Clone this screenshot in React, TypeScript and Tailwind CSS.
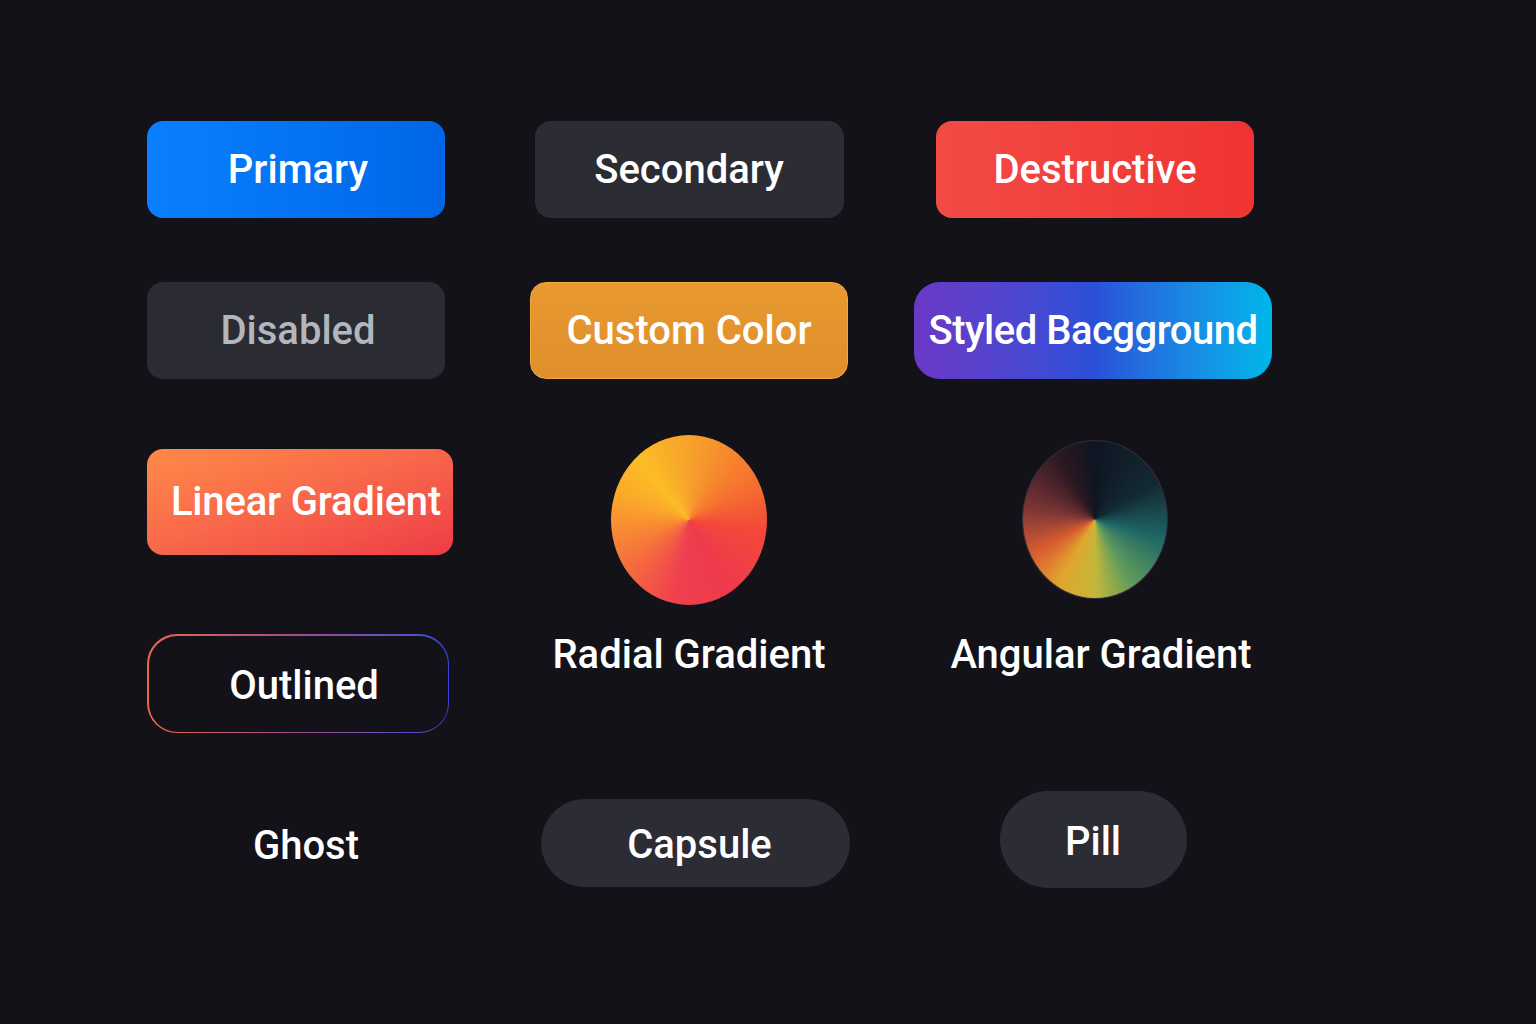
export default function App() {
  return (
    <div className="min-h-screen w-full bg-[#121218] font-['Roboto',sans-serif] text-[40px] font-medium text-white">
      <div className="pl-[147px] pt-[121px]">
        {/* Row 1 */}
        <div className="grid grid-cols-[352px_380px_432px] items-start">
          <div className="flex h-[97px] w-[298px] items-center justify-center rounded-[16px] bg-gradient-to-r from-[#0a80ff] to-[#0066e6] pl-[4px]">
            Primary
          </div>
          <div className="flex justify-center">
            <div className="flex h-[97px] w-[309px] items-center justify-center rounded-[16px] bg-[#2c2c34]">
              Secondary
            </div>
          </div>
          <div className="flex justify-center">
            <div className="flex h-[97px] w-[318px] items-center justify-center rounded-[16px] bg-gradient-to-r from-[#f34a45] to-[#ef3333]">
              Destructive
            </div>
          </div>
        </div>

        {/* Row 2 */}
        <div className="mt-[64px] grid grid-cols-[352px_380px_432px] items-start">
          <div className="flex h-[97px] w-[298px] items-center justify-center rounded-[16px] bg-[#2b2b33] pl-[4px] text-[#b2b7bd]">
            Disabled
          </div>
          <div className="flex justify-center">
            <div className="flex h-[97px] w-[318px] items-center justify-center rounded-[16px] border border-[#f0a840] bg-gradient-to-b from-[#e8992f] to-[#df8f2c]">
              Custom Color
            </div>
          </div>
          <div className="flex justify-center pr-[4px]">
            <div className="flex h-[97px] w-[358px] items-center justify-center whitespace-nowrap rounded-[26px] bg-gradient-to-r from-[#6a38c6] via-[#2a4fd8] to-[#00b6ea] tracking-[-0.5px]">
              Styled Bacgground
            </div>
          </div>
        </div>

        {/* Rows 3-4 */}
        <div className="mt-[56px] grid grid-cols-[352px_380px_432px] items-start">
          <div className="flex flex-col pt-[14px]">
            <div className="flex h-[106px] w-[306px] items-center justify-center whitespace-nowrap rounded-[16px] bg-gradient-to-br from-[#ff8a48] via-[#f8664a] to-[#ee3a48] pl-[12px] tracking-[-0.2px]">
              Linear Gradient
            </div>
            <div className="mt-[79px] w-[302px] rounded-[30px] bg-gradient-to-r from-[#e8684a] via-[#a04a8a] to-[#3a46d8] p-[1.5px]">
              <div className="flex h-[96px] items-center justify-center rounded-[28.5px] bg-[#121218] pl-[12px] pt-[4px]">
                Outlined
              </div>
            </div>
          </div>
          <div className="flex flex-col items-center">
            <div className="h-[170px] w-[156px] rounded-[50%] bg-[conic-gradient(from_0deg,#f7a22c_0deg,#f6742f_55deg,#f4473a_100deg,#ee3a4c_150deg,#ef404f_190deg,#f6753a_240deg,#fba82a_290deg,#fbbd26_320deg,#f7a22c_360deg)]" />
            <div className="mt-[26px] whitespace-nowrap leading-[48px]">Radial Gradient</div>
          </div>
          <div className="flex flex-col items-center pt-[5px]">
            <div className="h-[159px] w-[146px] rounded-[50%] border border-[#3a2a3a] bg-[conic-gradient(from_0deg,#0f1522_0deg,#132a33_60deg,#1e6566_105deg,#5e9a5c_150deg,#c4b83a_180deg,#e2a42e_210deg,#d95e30_240deg,#7c3535_280deg,#2a1822_330deg,#0f1522_360deg)]" />
            <div className="ml-[12px] mt-[32px] whitespace-nowrap leading-[48px]">Angular Gradient</div>
          </div>
        </div>

        {/* Row 5 */}
        <div className="mt-[58px] grid grid-cols-[352px_380px_432px] items-start">
          <div className="flex h-[97px] w-[318px] items-center justify-center pt-[12px]">Ghost</div>
          <div className="flex justify-center pl-[13px] pt-[8px]">
            <div className="flex h-[88px] w-[309px] items-center justify-center rounded-full bg-[#2c2c34] pl-[8px] pt-[4px]">
              Capsule
            </div>
          </div>
          <div className="flex justify-center pr-[4px]">
            <div className="flex h-[97px] w-[187px] items-center justify-center rounded-full bg-[#2c2c34] pt-[4px]">
              Pill
            </div>
          </div>
        </div>
      </div>
    </div>
  );
}
